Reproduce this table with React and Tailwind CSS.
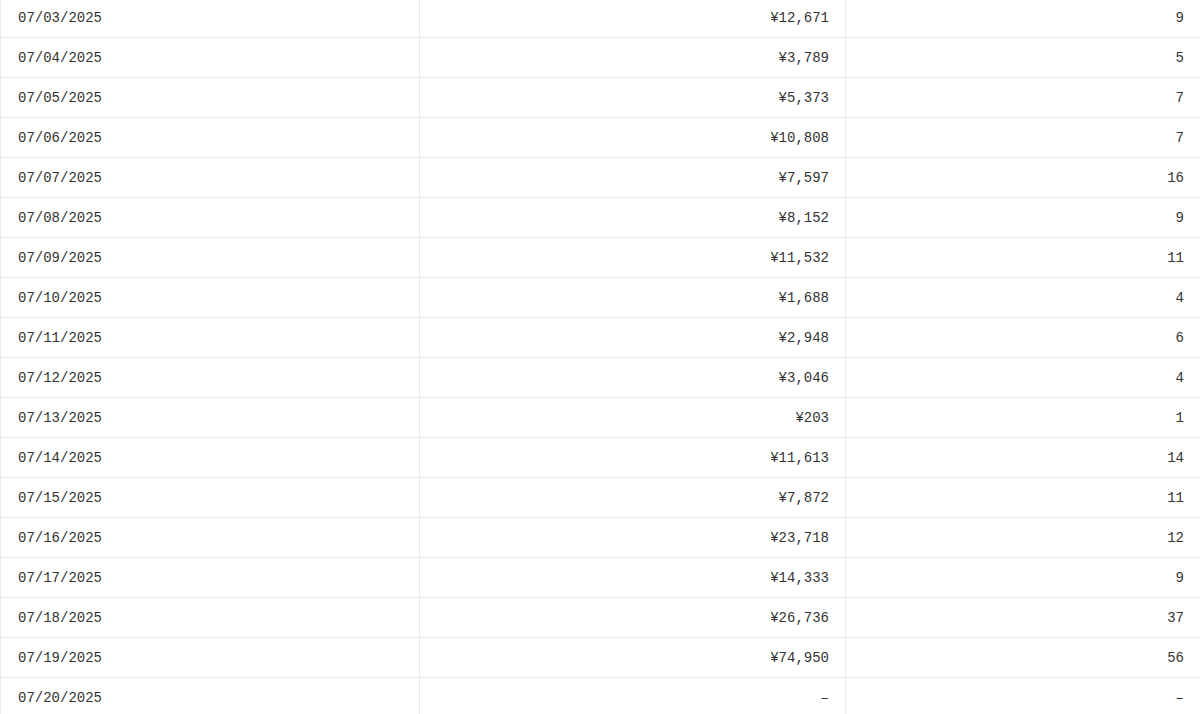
import React from 'react';

const rows = [
  ['07/03/2025', '¥12,671', '9'],
  ['07/04/2025', '¥3,789', '5'],
  ['07/05/2025', '¥5,373', '7'],
  ['07/06/2025', '¥10,808', '7'],
  ['07/07/2025', '¥7,597', '16'],
  ['07/08/2025', '¥8,152', '9'],
  ['07/09/2025', '¥11,532', '11'],
  ['07/10/2025', '¥1,688', '4'],
  ['07/11/2025', '¥2,948', '6'],
  ['07/12/2025', '¥3,046', '4'],
  ['07/13/2025', '¥203', '1'],
  ['07/14/2025', '¥11,613', '14'],
  ['07/15/2025', '¥7,872', '11'],
  ['07/16/2025', '¥23,718', '12'],
  ['07/17/2025', '¥14,333', '9'],
  ['07/18/2025', '¥26,736', '37'],
  ['07/19/2025', '¥74,950', '56'],
  ['07/20/2025', '–', '–'],
];

export default function App() {
  return (
    <div className="w-[1200px] h-[714px] overflow-hidden bg-white">
      <table
        className="-mt-[3px] w-[1200px] table-fixed border-collapse text-[14px] text-[#333333]"
        style={{ fontFamily: '"Liberation Mono", "DejaVu Sans Mono", monospace' }}
      >
        <colgroup>
          <col className="w-[419px]" />
          <col className="w-[426px]" />
          <col className="w-[355px]" />
        </colgroup>
        <tbody>
          {rows.map(([date, amount, count]) => (
            <tr key={date} className="h-[40px]">
              <td className="border border-[#e8e8e8] pl-[17px] pr-4 pt-[2px] text-left">{date}</td>
              <td className="border border-[#e8e8e8] px-4 pt-[2px] text-right">{amount}</td>
              <td className="border border-[#e8e8e8] px-4 pt-[2px] text-right">{count}</td>
            </tr>
          ))}
        </tbody>
      </table>
    </div>
  );
}
